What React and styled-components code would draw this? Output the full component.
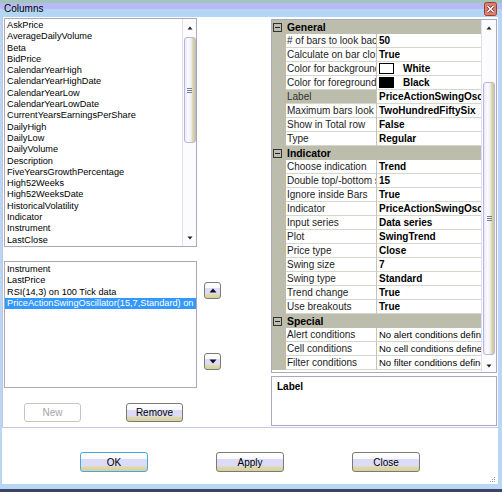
import styled, { createGlobalStyle } from "styled-components";

const GlobalStyle = createGlobalStyle`
    html, body {
        margin: 0;
        padding: 0;
        background: #fff;
    }
    body {
        font-family: "Liberation Sans", Arial, sans-serif;
        color: #000;
    }
`

const Window = styled.div`
    width: 502px;
    height: 492px;
    box-sizing: border-box;
    display: flex;
    flex-direction: column;
    border-bottom: 3px solid #3e4563;
    background: #fff;
    overflow: hidden;
`

const TitleBar = styled.div`
    height: 17px;
    flex-shrink: 0;
    display: flex;
    align-items: center;
    justify-content: space-between;
    padding: 0 5px 0 4px;
    font-size: 10px;
    background: linear-gradient(#a3c6bb 0, #a3c6bb 3px, #b8baf6 3px, #b8baf6 9px, #b2d6f4 9px);
`

const Body = styled.div`
    flex: 1;
    display: flex;
    flex-direction: column;
    border: solid #b7d7f5;
    border-width: 0 4px 5px 2px;
`

const Main = styled.div`
    height: 411px;
    box-sizing: border-box;
    flex-shrink: 0;
    display: flex;
    padding-top: 1px;
    border-left: 1px solid #c4c4e0;
    border-bottom: 1px solid #c8c8e8;
`

const LeftCol = styled.div`
    width: 193px;
    margin-left: 1px;
    display: flex;
    flex-direction: column;
`

const ListBox = styled.div`
    height: ${p => p.$h}px;
    margin-top: ${p => p.$mt || 0}px;
    box-sizing: border-box;
    border: 1px solid #a9a9bd;
    display: flex;
    overflow: hidden;
`

const Items = styled.div`
    flex: 1;
    padding-top: ${p => p.$pt}px;
    font-size: 9.2px;
    line-height: 11.3px;
    white-space: nowrap;
    overflow: hidden;
`

const Item = styled.div`
    padding-left: 2px;
    background: ${p => p.$selected ? '#3399ff' : 'transparent'};
    color: ${p => p.$selected ? '#fff' : '#000'};
`

const ScrollTrack = styled.div`
    width: ${p => p.$w}px;
    flex-shrink: 0;
    display: flex;
    flex-direction: column;
    align-items: center;
    box-sizing: border-box;
    border-left: 1px solid #e0e0f2;
    background: #fcfcff;
`

const Arrow = styled.div`
    height: ${p => p.$h}px;
    flex-shrink: 0;
    display: flex;
    align-items: center;
    justify-content: center;
`

const Thumb = styled.div`
    margin-top: ${p => p.$top}px;
    height: ${p => p.$h}px;
    width: 12px;
    box-sizing: border-box;
    border: 1px solid #b6b6de;
    border-radius: 3px;
    display: flex;
    flex-direction: column;
    align-items: center;
    justify-content: center;
    gap: 1px;
    background: linear-gradient(to right, #e8e8fa 0%, #fbfbff 30%, #f0f0f8 60%, #ddd8ac 76%, #cdc89a 100%);
`

const GripLine = styled.div`
    width: 5px;
    height: 1px;
    background: #7c7ca0;
`

const Spacer = styled.div`
    flex: 1;
`

const ButtonRow = styled.div`
    display: flex;
    gap: 45px;
    padding-left: 20px;
    margin-top: 15px;
`

const Button = styled.button`
    width: ${p => p.$w}px;
    height: ${p => p.$h}px;
    box-sizing: border-box;
    padding: 0;
    border: 1px solid ${p => p.$focus ? '#4aa6dc' : '#7b7b72'};
    border-radius: 3px;
    font-family: "Liberation Sans", Arial, sans-serif;
    font-size: 10px;
    color: #000;
    background: linear-gradient(#fff 0, #fafaff 32%, #dcdcfa 36%, #dcdcfa 72%, #dfdbac 76%, #d4d0a0 100%);

    &:disabled {
        border-color: #c6c6bc;
        color: #a4a4a4;
        background: #fff;
    }
`

const MidCol = styled.div`
    width: 17px;
    margin-left: 7px;
    display: flex;
    flex-direction: column;
`

const MoveButton = styled(Button)`
    margin-top: ${p => p.$mt}px;
    display: flex;
    align-items: center;
    justify-content: center;
`

const RightCol = styled.div`
    width: 226px;
    margin-left: 50px;
    margin-top: 1px;
    display: flex;
    flex-direction: column;
`

const Grid = styled.div`
    height: 354px;
    box-sizing: border-box;
    border: 1px solid #a9a9bd;
    display: flex;
    overflow: hidden;
`

const GridBody = styled.div`
    flex: 1;
    display: flex;
    flex-direction: column;
`

const Row = styled.div`
    height: 14px;
    flex-shrink: 0;
    display: grid;
    grid-template-columns: 14px 91px 104px;
    background: #bdbdad;
`

const HeaderRow = styled.div`
    height: 14px;
    flex-shrink: 0;
    display: flex;
    align-items: center;
    gap: 5px;
    padding-left: 1px;
    background: #bdbdad;
    font-size: 10.4px;
    font-weight: bold;
`

const Collapse = styled.span`
    width: 9px;
    height: 9px;
    box-sizing: border-box;
    border: 1px solid #333;
    display: flex;
    align-items: center;
    justify-content: center;

    &::after {
        content: "";
        width: 5px;
        height: 1px;
        background: #222;
    }
`

const NameCell = styled.div`
    box-sizing: border-box;
    padding-left: 1px;
    line-height: 13px;
    font-size: 10px;
    white-space: nowrap;
    overflow: hidden;
    border-bottom: 1px solid #d6d6ce;
    border-right: 1px solid #c4c4bc;
    background: ${p => p.$selected ? '#bdbdad' : '#fff'};
    color: ${p => p.$selected ? '#333' : '#1c1c1c'};
`

const ValueCell = styled.div`
    box-sizing: border-box;
    padding-left: 2px;
    display: flex;
    align-items: center;
    gap: 9px;
    font-size: ${p => p.$plain ? '9.5px' : '10px'};
    font-weight: ${p => p.$plain ? 'normal' : 'bold'};
    white-space: nowrap;
    overflow: hidden;
    border-bottom: 1px solid #d6d6ce;
    background: #fff;
`

const Swatch = styled.span`
    width: 15px;
    height: 11px;
    flex-shrink: 0;
    box-sizing: border-box;
    border: 1px solid #000;
    background: ${p => p.$color};
`

const LabelBox = styled.div`
    height: 50px;
    margin-top: 3px;
    box-sizing: border-box;
    border: 1px solid #a9a9bd;
    padding: 4px 5px;
    font-size: 10px;
    font-weight: bold;
`

const Footer = styled.div`
    flex: 1;
    display: flex;
    padding: 24px 0 0 78px;
    gap: 68px;
`

const Grip = styled.svg`
    margin-left: auto;
    align-self: flex-end;
    margin-right: 2px;
    margin-bottom: 1px;
`

const UpArrow = () => (
    <svg width="6" height="4" viewBox="0 0 6 4"><path d="M3 0.5 L5.5 3.5 L0.5 3.5 Z" fill="#222" /></svg>
)

const DownArrow = () => (
    <svg width="6" height="4" viewBox="0 0 6 4"><path d="M0.5 0.5 L5.5 0.5 L3 3.5 Z" fill="#222" /></svg>
)

const Scrollbar = ({ w, upH, top, h, downH }) => (
    <ScrollTrack $w={w}>
        <Arrow $h={upH}><UpArrow /></Arrow>
        <Thumb $top={top} $h={h}>
            <GripLine /><GripLine /><GripLine />
        </Thumb>
        <Spacer />
        <Arrow $h={downH}><DownArrow /></Arrow>
    </ScrollTrack>
)

const CloseIcon = () => (
    <svg width="13" height="14" viewBox="0 0 13 14">
        <rect x="0.5" y="0.5" width="12" height="13" rx="2" fill="#d98272" stroke="#a2392c" />
        <path d="M3.5 4 L9.5 10 M9.5 4 L3.5 10" stroke="#6b2a22" strokeWidth="3" />
        <path d="M3.5 4 L9.5 10 M9.5 4 L3.5 10" stroke="#fff" strokeWidth="1.6" />
    </svg>
)

const available = [
    'AskPrice', 'AverageDailyVolume', 'Beta', 'BidPrice', 'CalendarYearHigh', 'CalendarYearHighDate',
    'CalendarYearLow', 'CalendarYearLowDate', 'CurrentYearsEarningsPerShare', 'DailyHigh', 'DailyLow',
    'DailyVolume', 'Description', 'FiveYearsGrowthPercentage', 'High52Weeks', 'High52WeeksDate',
    'HistoricalVolatility', 'Indicator', 'Instrument', 'LastClose',
]

const selectedCols = [
    'Instrument', 'LastPrice', 'RSI(14,3) on 100 Tick data', 'PriceActionSwingOscillator(15,7,Standard) on',
]

const sections = [
    {
        title: 'General',
        rows: [
            ['# of bars to look back', '50'],
            ['Calculate on bar close', 'True'],
            ['Color for background', 'White', '#fff'],
            ['Color for foreground', 'Black', '#000'],
            ['Label', 'PriceActionSwingOscillator', null, true],
            ['Maximum bars look back', 'TwoHundredFiftySix'],
            ['Show in Total row', 'False'],
            ['Type', 'Regular'],
        ],
    },
    {
        title: 'Indicator',
        rows: [
            ['Choose indication', 'Trend'],
            ['Double top/-bottom strength', '15'],
            ['Ignore inside Bars', 'True'],
            ['Indicator', 'PriceActionSwingOscillator'],
            ['Input series', 'Data series'],
            ['Plot', 'SwingTrend'],
            ['Price type', 'Close'],
            ['Swing size', '7'],
            ['Swing type', 'Standard'],
            ['Trend change', 'True'],
            ['Use breakouts', 'True'],
        ],
    },
    {
        title: 'Special',
        plain: true,
        rows: [
            ['Alert conditions', 'No alert conditions defined'],
            ['Cell conditions', 'No cell conditions defined'],
            ['Filter conditions', 'No filter conditions defined'],
        ],
    },
]

function App() {
    return (
        <>
            <GlobalStyle />
            <Window>
                <TitleBar>
                    <span>Columns</span>
                    <CloseIcon />
                </TitleBar>
                <Body>
                    <Main>
                        <LeftCol>
                            <ListBox $h={229}>
                                <Items $pt={1}>
                                    {available.map(name => <Item key={name}>{name}</Item>)}
                                </Items>
                                <Scrollbar w={14} upH={18} top={0} h={106} downH={16} />
                            </ListBox>
                            <ListBox $h={127} $mt={14}>
                                <Items $pt={2}>
                                    {selectedCols.map((name, i) => (
                                        <Item key={name} $selected={i === 3}>{name}</Item>
                                    ))}
                                </Items>
                            </ListBox>
                            <ButtonRow>
                                <Button $w={57} $h={19} disabled>New</Button>
                                <Button $w={57} $h={19}>Remove</Button>
                            </ButtonRow>
                        </LeftCol>
                        <MidCol>
                            <MoveButton $w={17} $h={17} $mt={264}>
                                <svg width="8" height="5" viewBox="0 0 8 5"><path d="M4 0.5 L7.5 4.5 L0.5 4.5 Z" fill="#111" /></svg>
                            </MoveButton>
                            <MoveButton $w={17} $h={17} $mt={54}>
                                <svg width="8" height="5" viewBox="0 0 8 5"><path d="M0.5 0.5 L7.5 0.5 L4 4.5 Z" fill="#111" /></svg>
                            </MoveButton>
                        </MidCol>
                        <RightCol>
                            <Grid>
                                <GridBody>
                                    {sections.map(sec => (
                                        <div key={sec.title}>
                                            <HeaderRow>
                                                <Collapse />
                                                {sec.title}
                                            </HeaderRow>
                                            {sec.rows.map(([name, value, color, sel]) => (
                                                <Row key={name}>
                                                    <span />
                                                    <NameCell $selected={sel}>{name}</NameCell>
                                                    <ValueCell $plain={sec.plain}>
                                                        {color && <Swatch $color={color} />}
                                                        {value}
                                                    </ValueCell>
                                                </Row>
                                            ))}
                                        </div>
                                    ))}
                                </GridBody>
                                <Scrollbar w={15} upH={16} top={46} h={273} downH={12} />
                            </Grid>
                            <LabelBox>Label</LabelBox>
                        </RightCol>
                    </Main>
                    <Footer>
                        <Button $w={68} $h={20} $focus>OK</Button>
                        <Button $w={68} $h={20}>Apply</Button>
                        <Button $w={68} $h={20}>Close</Button>
                        <Grip width="7" height="7" viewBox="0 0 7 7">
                            <rect x="5" y="1" width="1" height="1" fill="#9a9aa8" />
                            <rect x="3" y="3" width="1" height="1" fill="#9a9aa8" />
                            <rect x="5" y="3" width="1" height="1" fill="#9a9aa8" />
                            <rect x="1" y="5" width="1" height="1" fill="#9a9aa8" />
                            <rect x="3" y="5" width="1" height="1" fill="#9a9aa8" />
                            <rect x="5" y="5" width="1" height="1" fill="#9a9aa8" />
                        </Grip>
                    </Footer>
                </Body>
            </Window>
        </>
    )
}

export default App;
